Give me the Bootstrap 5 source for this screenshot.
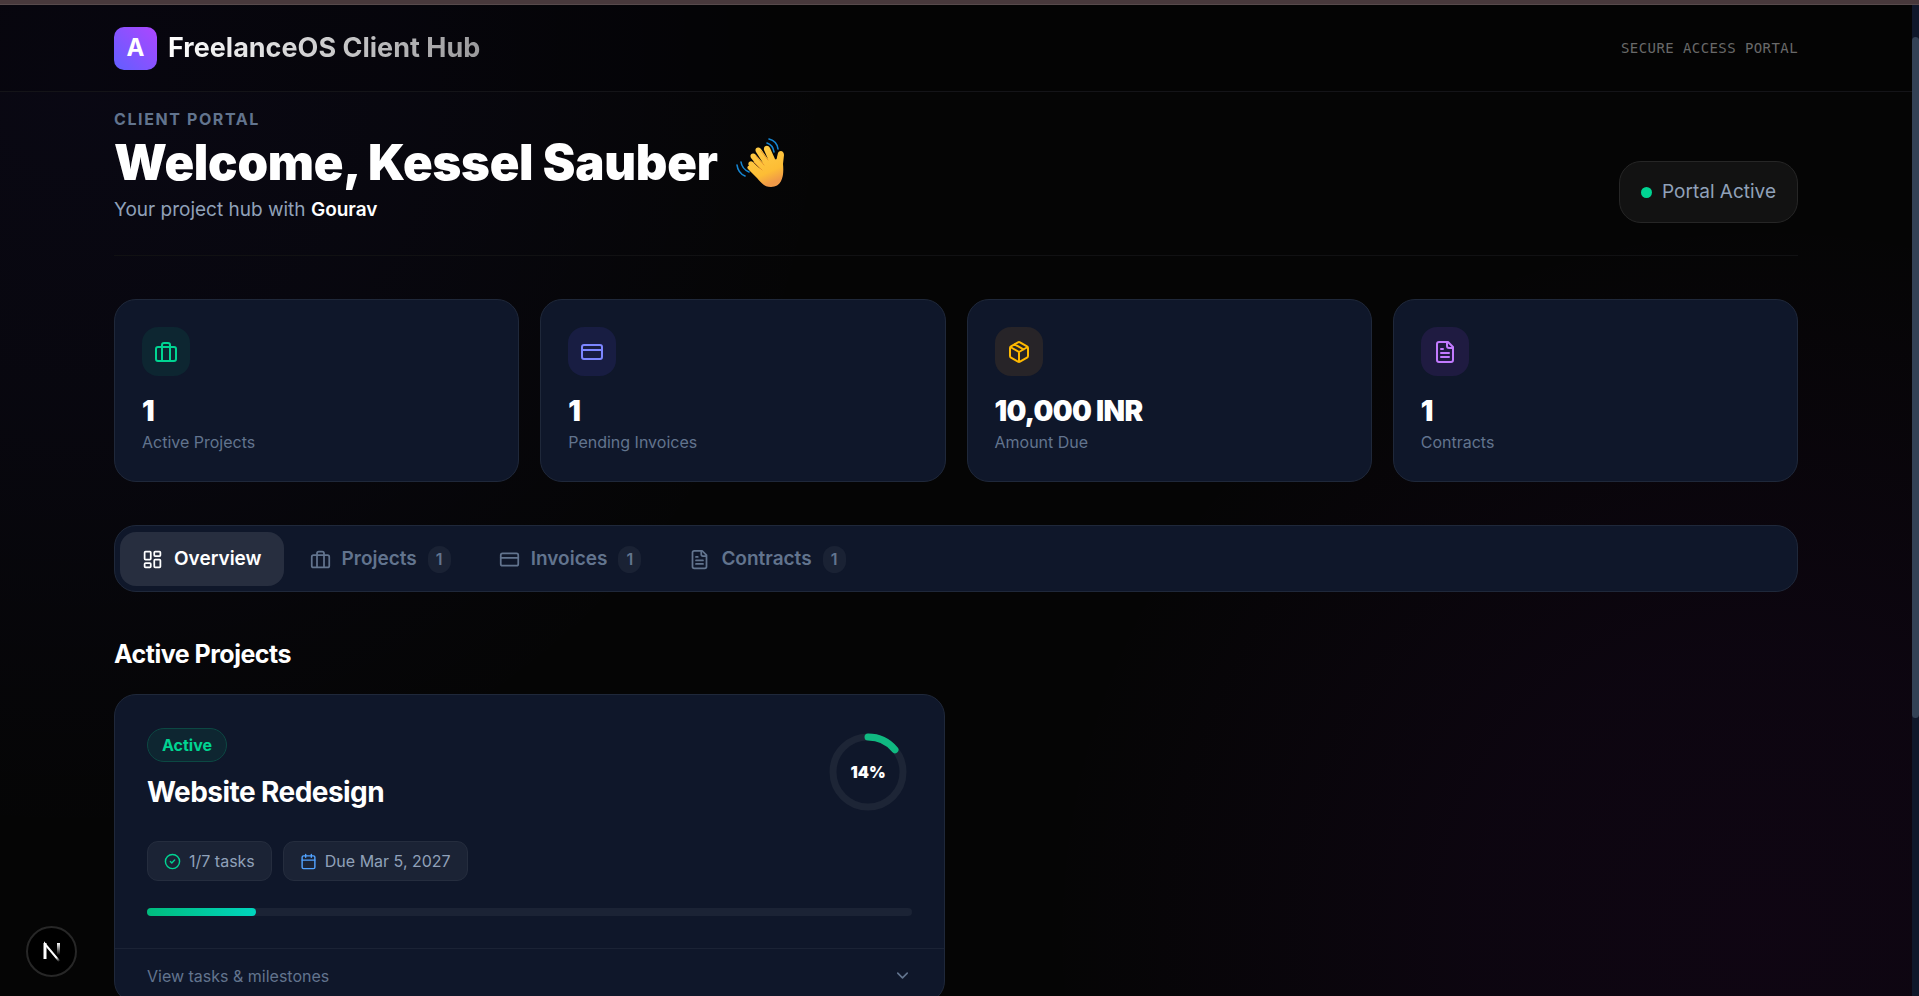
<!DOCTYPE html>
<html lang="en" data-bs-theme="dark">
<head>
<meta charset="utf-8">
<meta name="viewport" content="width=device-width, initial-scale=1">
<title>FreelanceOS Client Hub</title>
<link href="https://cdn.jsdelivr.net/npm/bootstrap@5.3.0/dist/css/bootstrap.min.css" rel="stylesheet">
<style>
:root{--slate-4:#90a1b9;--slate-5:#62748e;--panel:#0f172a;--line:rgba(255,255,255,.08);--green:#00d492}
body{font-family:Inter,"Open Sans",sans-serif;background-color:#050505;color:#fff;
  background-image:radial-gradient(circle 760px at 4% 8%,rgba(79,57,246,.06),rgba(79,57,246,.04) 45%,transparent),
  radial-gradient(circle 720px at 92% 94%,rgba(152,16,200,.07),rgba(152,16,220,.05) 40%,transparent)}
svg{display:block;flex:none}
.ico{fill:none;stroke:currentColor;stroke-width:2;stroke-linecap:round;stroke-linejoin:round}
.top-strip{height:5px;background:#48393c;border-bottom:1px solid #574a4c}
.page-wrap{width:100%;max-width:1732px;padding:0 24px;margin:0 auto}
.page-area{padding-right:7px}
.site-head{height:87px;border-bottom:1px solid #141418;background:rgba(0,0,0,.2)}
.logo-box{width:43px;height:43px;border-radius:10px;background:linear-gradient(45deg,#615fff,#ad46ff);font-size:24px;font-weight:700;line-height:24px}
.brand-row{gap:11px}
.brand-name{font-size:27px;line-height:36px;font-weight:700;background:linear-gradient(90deg,#fff,rgba(255,255,255,.6));-webkit-background-clip:text;background-clip:text;color:transparent}
.secure-note{font:14px/20px "DejaVu Sans Mono",monospace;letter-spacing:.03em;color:#696969}
.hero{padding:15px 0 30px;border-bottom:1px solid #111113}
.eyebrow{font-size:16px;line-height:24px;font-weight:700;letter-spacing:.1em;color:var(--slate-5)}
.hero h1{font-size:49px;line-height:64px;font-weight:900;letter-spacing:-.005em;gap:18px}
.hero-sub{font-size:19px;line-height:30px;color:var(--slate-4)}
.status-pill{height:62px;margin-bottom:2px;padding:0 21px;gap:10px;border:1px solid #262626;border-radius:22px;background:#121212;font-size:19px;color:var(--slate-4)}
.live-dot{width:11px;height:11px;border-radius:50%;background:var(--green)}
.stat-grid{display:grid;grid-template-columns:repeat(4,1fr);gap:21px;margin-top:43px}
.panel{background:var(--panel);border:1px solid #1f283a;border-radius:22px}
.stat{padding:27px}
.stat-icon{width:48px;height:49px;border-radius:16px}
.t-green{color:var(--green);background:#0d2631}
.t-indigo{color:#7c86ff;background:#181d42}
.t-amber{color:#ffb900;background:#272428}
.t-purple{color:#c27aff;background:#1f1b41}
.stat-num{font-size:28px;line-height:34px;font-weight:900;letter-spacing:-.025em;margin-top:18px}
.stat-label{font-size:16px;line-height:24px;margin-top:2px;color:var(--slate-5)}
.tab-row{margin-top:43px;padding:6px 5px 5px;gap:4px}
.tab-btn{height:54px;padding:0 22px;gap:11px;border:0;border-radius:16px;background:none;color:var(--slate-5);font-size:19px;font-weight:600}
.tab-btn.active{background:#272e3f;color:#fff}
.tab-count{min-width:23px;height:27px;border-radius:14px;background:#1a2234;font-size:16px}
.section-title{font-size:25px;line-height:36px;font-weight:700;letter-spacing:-.02em;margin:44px 0 22px}
.proj-grid{display:grid;grid-template-columns:1fr 1fr;gap:22px}
.proj-body{padding:33px 32px 32px}
.state-tag{height:34px;padding:0 14px;border:1px solid #0c4843;border-radius:17px;background:#0e2631;color:var(--green);font-size:16px;font-weight:700}
.proj-name{font-size:28px;line-height:36px;font-weight:700;letter-spacing:-.02em;margin-top:12px}
.ring{width:88px;height:88px}
.ring>*{grid-area:1/1}
.ring-text{font-size:16px;font-weight:900}
.chip{height:40px;padding:0 16px;gap:8px;border:1px solid #252d3e;border-radius:11px;background:#1b2335;font-size:16px;color:var(--slate-4)}
.c-green{color:var(--green)}
.c-blue{color:#51a2ff}
.chips{margin-top:25px;gap:11px}
.bar-track{height:8px;margin-top:27px;border-radius:4px;background:#1b2335}
.bar-fill{border-radius:4px;background:linear-gradient(90deg,#00bc7d,#00d5be)}
.proj-more{height:54px;padding:0 32px;border:0;border-top:1px solid #1b2335;background:none;color:var(--slate-5);font-size:16px}
.dev-btn{position:fixed;left:26px;bottom:19px;width:51px;height:51px;border:2px solid #272727;border-radius:50%;background:#000}
.scroll-track{position:fixed;top:5px;right:0;bottom:0;width:7px;padding-top:32px;background:#0f172a}
.scroll-thumb{height:71%;border-radius:4px;background:#334155}
</style>
</head>
<body class="vh-100 overflow-hidden">
<svg width="0" height="0" class="position-absolute" aria-hidden="true">
  <symbol id="i-case" viewBox="0 0 24 24"><path d="M16 20V5a2 2 0 0 0-2-2h-4a2 2 0 0 0-2 2v15"/><rect x="2" y="7" width="20" height="14" rx="2"/></symbol>
  <symbol id="i-card" viewBox="0 0 24 24"><rect x="2" y="5" width="20" height="14" rx="2"/><path d="M2 10h20"/></symbol>
  <symbol id="i-box" viewBox="0 0 24 24"><path d="M11 21.73a2 2 0 0 0 2 0l7-4A2 2 0 0 0 21 16V8a2 2 0 0 0-1-1.73l-7-4a2 2 0 0 0-2 0l-7 4A2 2 0 0 0 3 8v8a2 2 0 0 0 1 1.73zM12 22V12M3.3 7 12 12l8.7-5M7.5 4.27l9 5.15"/></symbol>
  <symbol id="i-file" viewBox="0 0 24 24"><path d="M15 2H6a2 2 0 0 0-2 2v16a2 2 0 0 0 2 2h12a2 2 0 0 0 2-2V7ZM14 2v4a2 2 0 0 0 2 2h4M10 9H8M16 13H8M16 17H8"/></symbol>
  <symbol id="i-dash" viewBox="0 0 24 24"><rect x="3" y="3" width="7" height="9" rx="1"/><rect x="14" y="3" width="7" height="5" rx="1"/><rect x="14" y="12" width="7" height="9" rx="1"/><rect x="3" y="16" width="7" height="5" rx="1"/></symbol>
</svg>
<div class="top-strip"></div>
<div class="page-area">
  <header class="site-head d-flex">
    <div class="page-wrap d-flex align-items-center justify-content-between">
      <div class="brand-row d-flex align-items-center">
        <span class="logo-box d-flex align-items-center justify-content-center">A</span>
        <span class="brand-name">FreelanceOS Client Hub</span>
      </div>
      <span class="secure-note">SECURE ACCESS PORTAL</span>
    </div>
  </header>
  <main class="page-wrap">
    <section class="hero d-flex justify-content-between align-items-end">
      <div>
        <div class="eyebrow">CLIENT PORTAL</div>
        <h1 class="d-flex align-items-center m-0"><span>Welcome, Kessel Sauber</span>
          <svg width="48" height="50" viewBox="0 0 48 50" role="img" aria-label="waving hand">
            <defs><linearGradient id="skin" x1="0" y1="0" x2=".4" y2="1"><stop offset="0" stop-color="#ffcf4a"/><stop offset=".75" stop-color="#fdbd35"/><stop offset="1" stop-color="#f09a47"/></linearGradient></defs>
            <path fill="url(#skin)" d="M13 28 C11 25 14 22 17 24 L24 31 L15 20 C13 16 17 14 20 17 L27 25 L20 14 C18 10 22 8 25 11 L32 21 L28 12 C27 8 32 6 34 10 L39 21 C40 22 41 21 41 19 L42 15 C43 12 48 12 48 17 L47 26 C48 36 47 49 35 49 C29 49 25 45 21 40 L12 31 C11 30 11 28 13 28Z"/>
            <path d="M18 24 26 32M20 18 28 27M25 13 32 22" fill="none" stroke="#e9972e" stroke-width="1" stroke-linecap="round"/>
            <path d="M31 5 Q37 7 38 14M33 1 Q41 3 42 11M5 24 Q6 31 13 34M1 27 Q2 35 9 38" fill="none" stroke="#1685d1" stroke-width="1.6" stroke-linecap="round"/>
          </svg>
        </h1>
        <div class="hero-sub">Your project hub with <span class="text-white fw-semibold">Gourav</span></div>
      </div>
      <div class="status-pill d-flex align-items-center"><span class="live-dot"></span>Portal Active</div>
    </section>

    <section class="stat-grid">
      <div class="panel stat"><div class="stat-icon t-green d-flex align-items-center justify-content-center"><svg class="ico" width="24" height="24"><use href="#i-case"/></svg></div><div class="stat-num">1</div><div class="stat-label">Active Projects</div></div>
      <div class="panel stat"><div class="stat-icon t-indigo d-flex align-items-center justify-content-center"><svg class="ico" width="24" height="24"><use href="#i-card"/></svg></div><div class="stat-num">1</div><div class="stat-label">Pending Invoices</div></div>
      <div class="panel stat"><div class="stat-icon t-amber d-flex align-items-center justify-content-center"><svg class="ico" width="24" height="24"><use href="#i-box"/></svg></div><div class="stat-num">10,000 INR</div><div class="stat-label">Amount Due</div></div>
      <div class="panel stat"><div class="stat-icon t-purple d-flex align-items-center justify-content-center"><svg class="ico" width="24" height="24"><use href="#i-file"/></svg></div><div class="stat-num">1</div><div class="stat-label">Contracts</div></div>
    </section>

    <nav class="panel tab-row d-flex">
      <button type="button" class="tab-btn active d-flex align-items-center"><svg class="ico" width="21" height="21"><use href="#i-dash"/></svg>Overview</button>
      <button type="button" class="tab-btn d-flex align-items-center"><svg class="ico" width="21" height="21"><use href="#i-case"/></svg>Projects<span class="tab-count d-flex align-items-center justify-content-center">1</span></button>
      <button type="button" class="tab-btn d-flex align-items-center"><svg class="ico" width="21" height="21"><use href="#i-card"/></svg>Invoices<span class="tab-count d-flex align-items-center justify-content-center">1</span></button>
      <button type="button" class="tab-btn d-flex align-items-center"><svg class="ico" width="21" height="21"><use href="#i-file"/></svg>Contracts<span class="tab-count d-flex align-items-center justify-content-center">1</span></button>
    </nav>

    <h2 class="section-title">Active Projects</h2>
    <div class="proj-grid">
      <article class="panel">
        <div class="proj-body">
          <div class="d-flex justify-content-between align-items-start">
            <div>
              <span class="state-tag d-inline-flex align-items-center align-top">Active</span>
              <h3 class="proj-name mb-0">Website Redesign</h3>
            </div>
            <div class="ring d-grid">
              <svg width="88" height="88" viewBox="0 0 88 88"><g fill="none" stroke-width="7"><circle cx="44" cy="44" r="35" stroke="#1d2536"/><circle cx="44" cy="44" r="35" stroke="#10b981" stroke-linecap="round" pathLength="100" stroke-dasharray="14 100" transform="rotate(-90 44 44)"/></g></svg>
              <span class="ring-text d-flex align-items-center justify-content-center">14%</span>
            </div>
          </div>
          <div class="chips d-flex">
            <span class="chip d-flex align-items-center"><svg class="ico c-green" width="17" height="17" viewBox="0 0 24 24"><circle cx="12" cy="12" r="10"/><path d="m9 12 2 2 4-4"/></svg>1/7 tasks</span>
            <span class="chip d-flex align-items-center"><svg class="ico c-blue" width="17" height="17" viewBox="0 0 24 24"><path d="M8 2v4M16 2v4M3 10h18"/><rect x="3" y="4" width="18" height="18" rx="2"/></svg>Due Mar 5, 2027</span>
          </div>
          <div class="bar-track d-flex"><div class="bar-fill" style="width:14.3%"></div></div>
        </div>
        <button type="button" class="proj-more w-100 d-flex align-items-center justify-content-between">View tasks &amp; milestones
          <svg class="ico" width="19" height="19" viewBox="0 0 24 24"><path d="m6 9 6 6 6-6"/></svg></button>
      </article>
    </div>
  </main>
</div>
<button type="button" class="dev-btn d-flex align-items-center justify-content-center p-0" aria-label="Dev tools">
  <svg width="20" height="22" viewBox="0 0 20 22" fill="none">
    <defs><linearGradient id="n1" x1="10" y1="10" x2="18" y2="20" gradientUnits="userSpaceOnUse"><stop stop-color="#fff"/><stop offset=".6" stop-color="#fff"/><stop offset="1" stop-color="#fff" stop-opacity="0"/></linearGradient>
    <linearGradient id="n2" x1="0" y1="2" x2="0" y2="14" gradientUnits="userSpaceOnUse"><stop stop-color="#fff"/><stop offset="1" stop-color="#fff" stop-opacity="0"/></linearGradient></defs>
    <path d="M3 18V3L18 21" stroke="url(#n1)" stroke-width="2"/><path d="M3 18V2" stroke="#fff" stroke-width="3"/><rect x="15" y="2" width="3" height="12" fill="url(#n2)"/>
  </svg>
</button>
<div class="scroll-track" aria-hidden="true"><div class="scroll-thumb"></div></div>
<script src="https://cdn.jsdelivr.net/npm/bootstrap@5.3.0/dist/js/bootstrap.bundle.min.js"></script>
</body>
</html>
